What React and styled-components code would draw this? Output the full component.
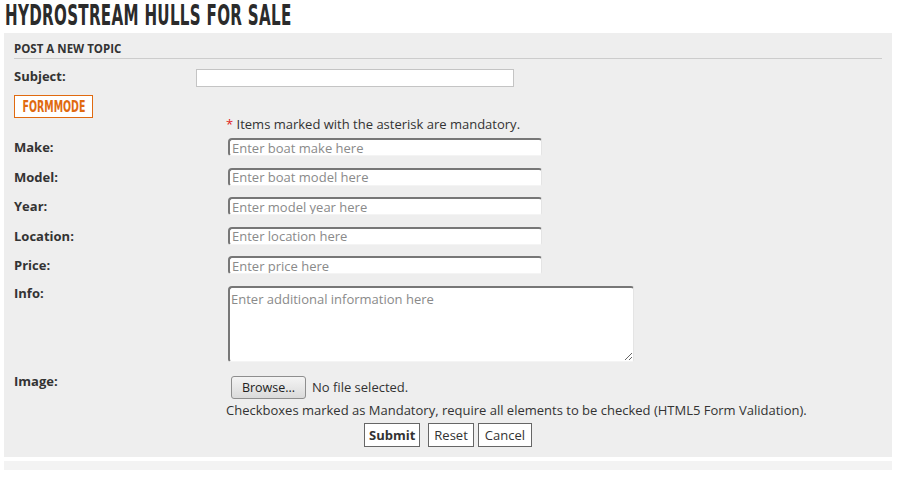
import * as React from "react"
import styled, { createGlobalStyle } from "styled-components"

const GlobalStyle = createGlobalStyle`
    html, body {
        margin: 0;
        padding: 0;
        background: #ffffff;
    }
    body {
        font-family: "Open Sans", "DejaVu Sans", sans-serif;
        font-size: 13px;
        color: #333;
    }
`

const Page = styled.div`
    width: 897px;
    padding: 0 5px 0 4px;
    box-sizing: border-box;
`

const Title = styled.h1`
    margin: 0;
    height: 33px;
    display: flex;
    align-items: flex-start;
    font-family: "DejaVu Sans Condensed", "DejaVu Sans", sans-serif;
    font-weight: 700;
    font-size: 28px;
    line-height: 32px;
    color: #2b2b2b;
    white-space: nowrap;
    span {
        display: inline-block;
        transform: scaleX(0.6);
        transform-origin: left center;
        margin-left: 1px;
        letter-spacing: 0.5px;
    }
`

const Panel = styled.div`
    background: #eeeeee;
    padding: 6px 10px 10px 10px;
    box-sizing: border-box;
    height: 424px;
`

const PanelHeader = styled.div`
    font-weight: 700;
    font-size: 11.5px;
    text-transform: uppercase;
    color: #333;
    line-height: 18px;
    padding-top: 1px;
    border-bottom: 1px solid #cccccc;
    margin-bottom: 10px;
`

const Row = styled.div`
    display: grid;
    grid-template-columns: ${p => p.$labelWidth}px 1fr;
    align-items: start;
`

const Label = styled.label`
    font-weight: 700;
    font-size: 13px;
    color: #333;
    line-height: 18px;
    margin-top: ${p => p.$offset || 0}px;
`

const SubjectInput = styled.input`
    width: 318px;
    height: 18px;
    box-sizing: border-box;
    border: 1px solid #c4c4c4;
    background: #fff;
    margin: 0;
`

const FormMode = styled.div`
    display: inline-flex;
    align-items: center;
    justify-content: center;
    width: 79px;
    height: 23px;
    box-sizing: border-box;
    border: 1px solid #e06a10;
    background: #fff;
    color: #e06a10;
    font-family: "DejaVu Sans Condensed", "DejaVu Sans", sans-serif;
    font-weight: 700;
    font-size: 15px;
    margin: 8px 0 0 0;
    span {
        display: inline-block;
        transform: scaleX(0.7);
    }
`

const Note = styled.div`
    padding-left: 212px;
    font-size: 13px;
    line-height: 16px;
    margin-top: -2px;
    margin-bottom: 6px;
    color: #333;
    b {
        color: #e02020;
        font-weight: 400;
    }
`

const Fields = styled.div`
    display: flex;
    flex-direction: column;
    gap: 11.5px;
`

const fieldBorder = `
    border-top: 2px solid #777;
    border-left: 2px solid #777;
    border-right: 1px solid #e4e4e4;
    border-bottom: 1px solid #f4f4f4;
    border-radius: 4px 3px 2px 3px;
    background: #fff;
    font-family: "Open Sans", "DejaVu Sans", sans-serif;
    font-size: 13px;
    box-sizing: border-box;
    margin: 0 0 0 2px;
    &::placeholder {
        color: #8a8a8a;
    }
`

const TextField = styled.input`
    ${fieldBorder}
    width: 314px;
    height: 18px;
    padding: 0 2px;
`

const TextArea = styled.textarea`
    ${fieldBorder}
    width: 406px;
    height: 76px;
    padding: 2px 1px;
    display: block;
`

const FileLine = styled.div`
    display: flex;
    align-items: center;
    gap: 6px;
    padding-left: 5px;
    font-size: 13px;
    margin-top: 14px;
`

const BrowseButton = styled.button`
    width: 75px;
    height: 23px;
    border: 1px solid #8e8e8e;
    border-radius: 3px;
    background: linear-gradient(#f4f4f4, #dadada);
    font-family: "Open Sans", "DejaVu Sans", sans-serif;
    font-size: 12.5px;
    color: #222;
    padding: 0;
`

const Hint = styled.div`
    padding-left: 212px;
    font-size: 13px;
    line-height: 16px;
    margin-top: 3px;
    color: #333;
`

const Actions = styled.div`
    display: flex;
    padding-left: 350px;
    margin-top: 5px;
`

const ActionButton = styled.button`
    height: 24px;
    padding: 0 ${p => p.$pad || 4}px;
    margin-right: ${p => p.$after || 0}px;
    border: 1px solid #666;
    background: #fff;
    font-family: "Open Sans", "DejaVu Sans", sans-serif;
    font-size: 13px;
    font-weight: ${p => (p.$primary ? 700 : 400)};
    color: #333;
`

const Strip = styled.div`
    margin-top: 4px;
    height: 9px;
    background: #f3f3f3;
`

const fields = [
    { label: "Make:", placeholder: "Enter boat make here" },
    { label: "Model:", placeholder: "Enter boat model here" },
    { label: "Year:", placeholder: "Enter model year here" },
    { label: "Location:", placeholder: "Enter location here" },
    { label: "Price:", placeholder: "Enter price here" },
]

const App = () => (
    <Page>
        <GlobalStyle />
        <Title><span>HYDROSTREAM HULLS FOR SALE</span></Title>
        <Panel>
            <PanelHeader>Post a new topic</PanelHeader>
            <Row $labelWidth={182}>
                <Label $offset={-2}>Subject:</Label>
                <SubjectInput type="text" />
            </Row>
            <FormMode><span>FORMMODE</span></FormMode>
            <Note><b>*</b> Items marked with the asterisk are mandatory.</Note>
            <Fields>
                {fields.map(f => (
                    <Row key={f.label} $labelWidth={212}>
                        <Label $offset={0}>{f.label}</Label>
                        <TextField type="text" placeholder={f.placeholder} />
                    </Row>
                ))}
                <Row $labelWidth={212}>
                    <Label $offset={-2}>Info:</Label>
                    <TextArea placeholder="Enter additional information here" />
                </Row>
            </Fields>
            <Row $labelWidth={212}>
                <Label $offset={10}>Image:</Label>
                <FileLine>
                    <BrowseButton type="button">Browse...</BrowseButton>
                    <span>No file selected.</span>
                </FileLine>
            </Row>
            <Hint>Checkboxes marked as Mandatory, require all elements to be checked (HTML5 Form Validation).</Hint>
            <Actions>
                <ActionButton $primary $after={8}>Submit</ActionButton>
                <ActionButton type="reset" $pad={5} $after={4}>Reset</ActionButton>
                <ActionButton type="button" $pad={6}>Cancel</ActionButton>
            </Actions>
        </Panel>
        <Strip />
    </Page>
)

export default App
